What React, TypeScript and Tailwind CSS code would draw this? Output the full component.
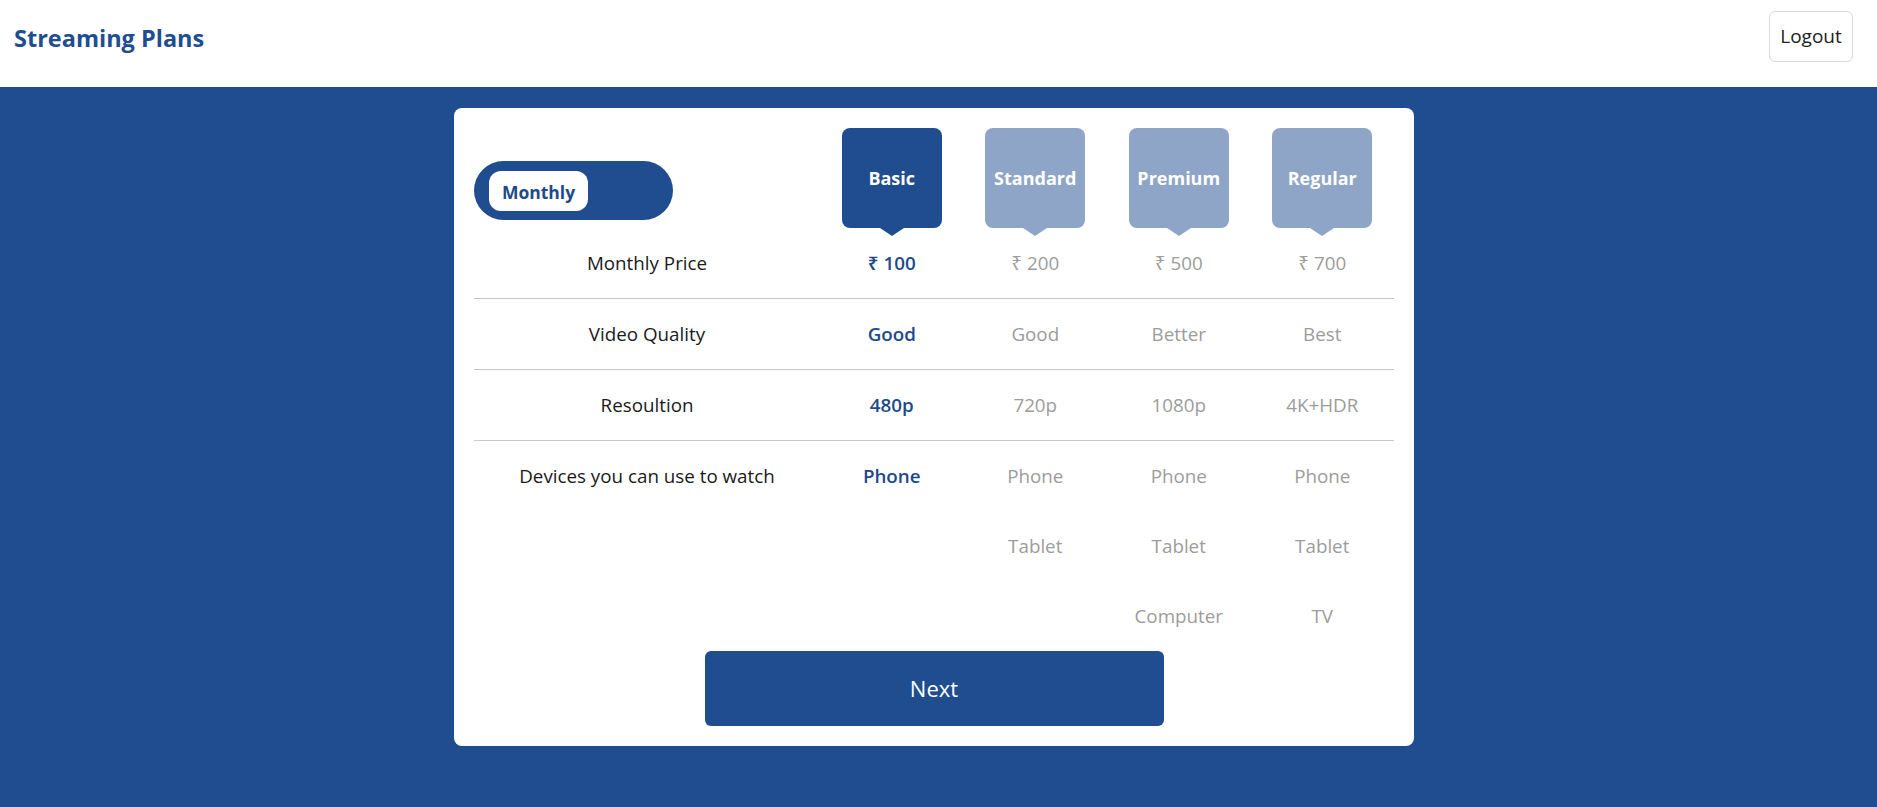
import React from 'react';

const BLUE = '#1f4d8f';

interface Plan {
  name: string;
  price: string;
  quality: string;
  resolution: string;
  devices: string[];
}

const PLANS: Plan[] = [
  { name: 'Basic', price: '₹ 100', quality: 'Good', resolution: '480p', devices: ['Phone'] },
  { name: 'Standard', price: '₹ 200', quality: 'Good', resolution: '720p', devices: ['Phone', 'Tablet'] },
  { name: 'Premium', price: '₹ 500', quality: 'Better', resolution: '1080p', devices: ['Phone', 'Tablet', 'Computer'] },
  { name: 'Regular', price: '₹ 700', quality: 'Best', resolution: '4K+HDR', devices: ['Phone', 'Tablet', 'TV'] },
];

function PlanCard({ name, active }: { name: string; active: boolean }) {
  return (
    <div
      className={`relative w-[100px] h-[100px] rounded-lg flex items-center justify-center text-white font-bold text-[18px] ${
        active ? 'bg-[#1f4d8f]' : 'bg-[#8fa5c7]'
      }`}
    >
      {name}
      <span
        className={`absolute left-1/2 -translate-x-1/2 -bottom-[8px] w-0 h-0 border-l-[12px] border-r-[12px] border-t-[8px] border-l-transparent border-r-transparent ${
          active ? 'border-t-[#1f4d8f]' : 'border-t-[#8fa5c7]'
        }`}
      />
    </div>
  );
}

export default function App() {
  const selected = 0;
  const rows: { label: string; key: 'price' | 'quality' | 'resolution' }[] = [
    { label: 'Monthly Price', key: 'price' },
    { label: 'Video Quality', key: 'quality' },
    { label: 'Resoultion', key: 'resolution' },
  ];

  const cellText = (i: number) =>
    i === selected ? 'text-[#1e4a8a] font-semibold' : 'text-[#9c9c9c]';

  return (
    <div className="min-h-screen bg-[#1f4d8f]" style={{ fontFamily: '"Open Sans", "Noto Sans", sans-serif' }}>
      <header className="h-[87px] bg-white flex justify-between items-start pl-[14px] pr-[24px] pt-[11px]">
        <div className="h-[51px] pt-[4px] flex items-center text-[23.5px] font-bold text-[#1f4d8f]">
          Streaming Plans
        </div>
        <button className="h-[51px] w-[84px] border border-[#d8d8d8] rounded-md bg-white text-[19px] text-[#222]">
          Logout
        </button>
      </header>

      <div className="flex justify-center pt-[21px] pr-[9px]">
        <div className="w-[960px] bg-white rounded-lg p-5">
          <div className="grid grid-cols-[346px_repeat(4,1fr)]">
            <div className="h-[100px] pt-[33px]">
              <div className="w-[199px] h-[59px] rounded-full bg-[#1f4d8f] flex items-center pl-[15px]">
                <div className="w-[99px] h-[40px] rounded-[12px] bg-white flex items-center justify-center pt-[3px] text-[17.5px] font-bold text-[#1e4a8a]">
                  Monthly
                </div>
              </div>
            </div>
            {PLANS.map((p, i) => (
              <div key={p.name} className="h-[100px] flex justify-center">
                <PlanCard name={p.name} active={i === selected} />
              </div>
            ))}

            {rows.map((r) => (
              <React.Fragment key={r.key}>
                <div className="h-[71px] border-b border-[#c8c8c8] flex items-center justify-center text-[18.8px] text-[#1a1a1a]">
                  {r.label}
                </div>
                {PLANS.map((p, i) => (
                  <div
                    key={p.name}
                    className={`h-[71px] border-b border-[#c8c8c8] flex items-center justify-center text-[18.8px] ${cellText(i)}`}
                  >
                    {p[r.key]}
                  </div>
                ))}
              </React.Fragment>
            ))}

            <div className="h-[70px] flex items-center justify-center text-[18.8px] text-[#1a1a1a]">
              Devices you can use to watch
            </div>
            {PLANS.map((p, i) => (
              <div key={p.name} className="flex flex-col">
                {p.devices.map((d) => (
                  <div key={d} className={`h-[70px] flex items-center justify-center text-[18.8px] ${cellText(i)}`}>
                    {d}
                  </div>
                ))}
              </div>
            ))}
          </div>

          <button
            className="mx-auto block w-[459px] h-[75px] rounded-md text-white text-[22px]"
            style={{ backgroundColor: BLUE }}
          >
            Next
          </button>
        </div>
      </div>
    </div>
  );
}
